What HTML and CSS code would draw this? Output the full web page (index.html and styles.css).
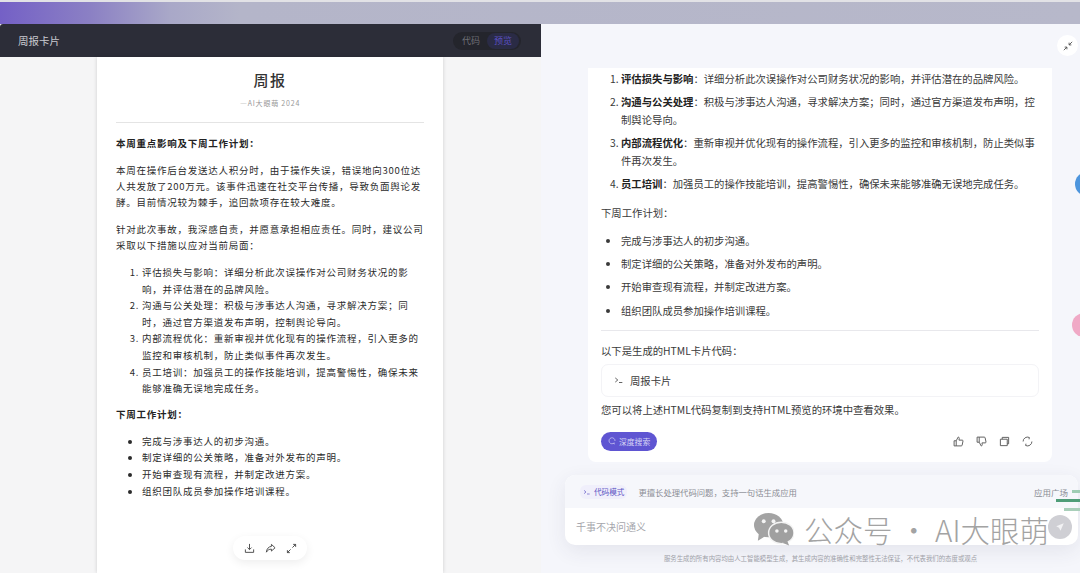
FILE: index.html
```html
<!DOCTYPE html>
<html lang="zh">
<head>
<meta charset="utf-8">
<title>周报卡片</title>
<link rel="stylesheet" href="styles.css">
</head>
<body>
<div class="app">
  <div class="strip"></div>
  <div class="main">
    <section class="left">
      <header class="bar">
        <span class="bar-title">周报卡片</span>
        <div class="toggle"><span class="tab">代码</span><span class="tab tab-on">预览</span></div>
      </header>
      <div class="stage">
        <article class="paper">
          <h1 class="paper-title">周报</h1>
          <p class="paper-sub">—AI大眼萌 2024</p>
          <hr class="paper-rule">
          <h2 class="paper-h">本周重点影响及下周工作计划：</h2>
          <p class="paper-p">本周在操作后台发送达人积分时，由于操作失误，错误地向300位达人共发放了200万元。该事件迅速在社交平台传播，导致负面舆论发酵。目前情况较为棘手，追回款项存在较大难度。</p>
          <p class="paper-p">针对此次事故，我深感自责，并愿意承担相应责任。同时，建议公司采取以下措施以应对当前局面：</p>
          <ol class="paper-ol">
            <li>评估损失与影响：详细分析此次误操作对公司财务状况的影响，并评估潜在的品牌风险。</li>
            <li>沟通与公关处理：积极与涉事达人沟通，寻求解决方案；同时，通过官方渠道发布声明，控制舆论导向。</li>
            <li>内部流程优化：重新审视并优化现有的操作流程，引入更多的监控和审核机制，防止类似事件再次发生。</li>
            <li>员工培训：加强员工的操作技能培训，提高警惕性，确保未来能够准确无误地完成任务。</li>
          </ol>
          <h2 class="paper-h paper-h2">下周工作计划：</h2>
          <ul class="paper-ul">
            <li>完成与涉事达人的初步沟通。</li>
            <li>制定详细的公关策略，准备对外发布的声明。</li>
            <li>开始审查现有流程，并制定改进方案。</li>
            <li>组织团队成员参加操作培训课程。</li>
          </ul>
        </article>
        <div class="tools">
          <svg class="ico" viewBox="0 0 12 12"><path d="M6 1v6M3.8 5 6 7.2 8.2 5M1.5 7v3.2h9V7"/></svg>
          <svg class="ico" viewBox="0 0 12 12"><path d="M7 1.500 11 5.200 7 8.800V6.700C4.500 6.700 3 7.600 1.500 10 1.800 6.500 3.800 4 7 3.700z"/></svg>
          <svg class="ico" viewBox="0 0 12 12"><path d="M7 5 10.500 1.500M7.800 1.500h2.700v2.700M5 7 1.500 10.500M1.500 7.800v2.700h2.700"/></svg>
        </div>
      </div>
    </section>
    <section class="right">
      <button class="collapse" aria-label="收起"><svg class="ico-sm" viewBox="0 0 12 12"><path d="M11 1 7.500 4.500M7.300 2v2.700H10M1 11l3.500-3.500M4.700 10V7.300H2"/></svg></button>
      <div class="answer">
        <ol class="a-ol">
          <li><b>评估损失与影响</b>：详细分析此次误操作对公司财务状况的影响，并评估潜在的品牌风险。</li>
          <li><b>沟通与公关处理</b>：积极与涉事达人沟通，寻求解决方案；同时，通过官方渠道发布声明，控制舆论导向。</li>
          <li><b>内部流程优化</b>：重新审视并优化现有的操作流程，引入更多的监控和审核机制，防止类似事件再次发生。</li>
          <li><b>员工培训</b>：加强员工的操作技能培训，提高警惕性，确保未来能够准确无误地完成任务。</li>
        </ol>
        <p class="a-p a-plan">下周工作计划：</p>
        <ul class="a-ul">
          <li>完成与涉事达人的初步沟通。</li>
          <li>制定详细的公关策略，准备对外发布的声明。</li>
          <li>开始审查现有流程，并制定改进方案。</li>
          <li>组织团队成员参加操作培训课程。</li>
        </ul>
        <hr class="a-rule">
        <p class="a-p a-intro">以下是生成的HTML卡片代码：</p>
        <div class="code-card">
          <svg class="ico-sm" viewBox="0 0 12 12"><path d="M1.500 3.500 4.500 6 1.500 8.500M6 9h4"/></svg>
          <span>周报卡片</span>
        </div>
        <p class="a-p a-end">您可以将上述HTML代码复制到支持HTML预览的环境中查看效果。</p>
        <div class="a-foot">
          <span class="deep"><svg class="ico-xs" viewBox="0 0 12 12"><path d="M9.500 8.500A4.500 4.500 0 1 1 10.500 6M8 9.500l2.500 1"/></svg>深度搜索</span>
          <div class="actions">
            <svg class="ico-a" viewBox="0 0 12 12"><path d="M3.500 5.200v5.600H1.200V5.200zM3.500 5.200 5.600 1.200c1 0 1.400.7 1.200 1.600L6.500 4.500h3.600c.6 0 .9.5.8 1l-.9 4.400c-.1.6-.5.9-1 .9H3.500"/></svg>
            <svg class="ico-a" viewBox="0 0 12 12"><path d="M3.500 6.800V1.200H1.200v5.600zM3.500 6.800l2.100 4c1 0 1.400-.7 1.200-1.600l-.3-1.700h3.600c.6 0 .9-.5.8-1l-.9-4.400c-.1-.6-.5-.9-1-.9H3.500"/></svg>
            <svg class="ico-a" viewBox="0 0 12 12"><path d="M1.500 3.500h7.500v7H1.500zM3.500 3.500V1.500h7v7H9"/></svg>
            <svg class="ico-a" viewBox="0 0 12 12"><path d="M10.800 6A4.800 4.800 0 0 1 4 10.400M1.200 6A4.800 4.800 0 0 1 8 1.600M8 1.600l-.3 2M4 10.400l.3-2"/></svg>
          </div>
        </div>
      </div>
      <div class="composer">
        <div class="composer-top">
          <span class="mode"><svg class="ico-xs" viewBox="0 0 12 12"><path d="M1.500 3.500 4.500 6 1.500 8.500M6 9h4"/></svg>代码模式</span>
          <span class="mode-tip">更擅长处理代码问题，支持一句话生成应用</span>
          <span class="plaza">应用广场</span>
        </div>
        <div class="composer-input">
          <span class="placeholder">千事不决问通义</span>
          <span class="send"><svg class="ico-send" viewBox="0 0 12 12"><path d="M10.500 1.500 1.500 5.200 4.800 7 6.600 10.500z"/></svg></span>
        </div>
      </div>
      <p class="legal">服务生成的所有内容均由人工智能模型生成，其生成内容的准确性和完整性无法保证，不代表我们的态度或观点</p>
      <span class="float float-blue"></span>
      <span class="float float-pink"></span>
      <div class="lines"><i class="line l1"></i><i class="line l2"></i><i class="line l3"></i></div>
    </section>
    <div class="watermark">
      <svg class="wx" viewBox="0 0 42 34"><ellipse cx="16" cy="13" rx="15" ry="12.500" fill="#a3a3a3"/><path d="M6 21 5 29 13 24z" fill="#a3a3a3"/><circle cx="11" cy="9" r="2" fill="#f4f4f4"/><circle cx="21" cy="9" r="2" fill="#f4f4f4"/><ellipse cx="29" cy="21" rx="13" ry="11" fill="#a0a0a0" stroke="#f4f4f4" stroke-width="1.500"/><path d="M35 29l2 5-7-3z" fill="#a0a0a0"/><circle cx="24.500" cy="19" r="1.800" fill="#f4f4f4"/><circle cx="33.500" cy="19" r="1.800" fill="#f4f4f4"/></svg>
      <span>公众号 · AI大眼萌</span>
    </div>
  </div>
</div>
</body>
</html>
```
FILE: styles.css
```css
* { box-sizing: border-box; }
html, body { margin: 0; padding: 0; }
body {
  width: 1080px; height: 573px; overflow: hidden;
  font-family: "Noto Sans CJK SC", "Noto Sans", sans-serif;
  background: #f5f6fb;
}
.app { display: flex; flex-direction: column; height: 573px; }
.strip {
  flex: 0 0 24px;
  border-top: 2px solid #e2e2e6;
  background: linear-gradient(90deg, #7460c6 0, #8b80c4 90px, #a9a8c8 170px, #b4b5c9 240px, #b7b8ca 100%);
}
.main { flex: 1; display: flex; position: relative; min-height: 0; }

.left { flex: 0 0 541px; display: flex; flex-direction: column; min-height: 0; background: #f5f5f6; }
.bar {
  flex: 0 0 33px; display: flex; align-items: center; justify-content: space-between;
  padding: 0 20px 0 18px;
  background: #2c2d38; border-radius: 3px 0 0 0;
}
.bar-title { font-size: 10.500px; color: #c9cad0; }
.toggle { display: flex; align-items: center; height: 18px; background: #24252c; border-radius: 9px; padding: 0 2px; }
.tab { font-size: 9px; color: #6e6f76; padding: 0 7px; line-height: 16px; border-radius: 8px; }
.tab-on { color: #5b50c0; background: #2a2b45; }

.stage { flex: 1; position: relative; display: flex; min-height: 0; padding-left: 97px; }
.paper {
  width: 346px; height: 100%;
  background: #fff; box-shadow: 0 0 4px rgba(0,0,0,.16);
  padding: 10px 19px 0 19px; color: #2b2b2b;
  font-size: 9.500px; letter-spacing: .75px;
}
.paper-title { margin: 0; font-size: 15px; font-weight: 500; line-height: 26px; text-align: center; letter-spacing: 1.500px; color: #333; }
.paper-sub { margin: 4px 0 0; font-size: 7px; line-height: 12px; text-align: center; color: #999; letter-spacing: .8px; }
.paper-rule { margin: 13px 0 0; border: 0; border-top: 1px solid #e4e4e4; }
.paper-h { margin: 12px 0 0; font-size: 9.500px; line-height: 16px; font-weight: 700; color: #222; }
.paper-h2 { margin-top: 9px; }
.paper-p { margin: 11px 0 0; line-height: 16px; }
.paper-ol { margin: 11px 0 0; padding: 0 0 0 26px; }
.paper-ol li { line-height: 16.600px; }
.paper-ul { margin: 11px 0 0; padding: 0 0 0 26px; }
.paper-ul li { line-height: 16.600px; }

.tools {
  position: absolute; left: 233px; top: 479px; width: 74px; height: 24px;
  display: flex; align-items: center; justify-content: center; gap: 10px;
  background: #fff; border-radius: 12px; box-shadow: 0 3px 10px rgba(0,0,0,.07);
}
.ico { width: 11px; height: 11px; fill: none; stroke: #444; stroke-width: 1; }
.ico-sm { width: 10px; height: 10px; fill: none; stroke: #444; stroke-width: 1; flex: none; }
.ico-xs { width: 8px; height: 8px; fill: none; stroke: currentColor; stroke-width: 1; flex: none; }
.ico-a { width: 11px; height: 11px; fill: none; stroke: #555; stroke-width: 1; }

.right { flex: 1; position: relative; display: flex; flex-direction: column; min-width: 0; background: #f5f6fb; }
.collapse {
  position: absolute; top: 11px; right: 2px; width: 21px; height: 21px; padding: 0;
  display: flex; align-items: center; justify-content: center;
  background: #fff; border: 0; border-radius: 50%;
}
.answer {
  margin: 44px 28px 0 47px; padding: 2px 13px 0 13px; height: 394px;
  background: #fff; border-radius: 0 0 8px 8px;
  font-size: 10.350px; color: #3a3a3a;
}
.a-ol { margin: 0; padding: 0 0 0 20px; }
.a-ol li { line-height: 18px; margin-bottom: 5px; }
.a-ol b { color: #222; font-weight: 700; }
.a-p { margin: 0; line-height: 18px; }
.a-plan { margin-top: 11px; }
.a-ul { margin: 10px 0 0; padding: 0 0 0 20px; }
.a-ul li { line-height: 18px; margin-bottom: 5.200px; }
.a-rule { margin: 10px 0 0; border: 0; border-top: 1px solid #e8e8ec; }
.a-intro { margin-top: 11px; }
.code-card {
  margin-top: 4px; height: 33px; display: flex; align-items: center; gap: 6px;
  padding: 0 12px; border: 1px solid #f3f3f6; border-radius: 7px; font-size: 10.350px;
}
.a-end { margin-top: 4px; }
.a-foot { margin-top: 13px; display: flex; align-items: center; justify-content: space-between; }
.deep {
  display: inline-flex; align-items: center; gap: 3px; height: 19px; padding: 0 7px;
  background: #5f55d2; color: #d8d6f6; font-size: 7.800px; border-radius: 10px;
}
.actions { display: flex; gap: 12px; margin-right: 6px; }

.composer {
  position: absolute; left: 24px; top: 451px; width: 513px; height: 70px;
  border-radius: 10px; background: #fff; overflow: hidden;
  box-shadow: 0 6px 20px rgba(60,60,90,.09);
}
.composer-top {
  height: 33px; display: flex; align-items: center; padding: 0 10px 0 15px;
  background: #f6f7fb; font-size: 8.300px; color: #8b8d95;
}
.mode { display: inline-flex; align-items: center; gap: 3px; color: #5d55c4; background: #f0effb; padding: 0 3px; border-radius: 6px; line-height: 14px; font-size: 7.600px; }
.mode-tip { margin-left: 11px; font-size: 8.350px; }
.plaza { margin-left: auto; font-size: 8.500px; }
.composer-input { height: 37px; display: flex; align-items: center; justify-content: space-between; padding: 0 6px 0 11px; }
.placeholder { font-size: 10px; color: #a5a6ac; }
.send { width: 24px; height: 24px; border-radius: 50%; background: #cfcfd4; display: flex; align-items: center; justify-content: center; }
.ico-send { width: 10px; height: 10px; fill: #f2f2f4; }
.legal { position: absolute; left: 20px; right: 0; top: 530px; margin: 0; text-align: center; font-size: 6.400px; line-height: 10px; color: #a0a1a8; }
.float { position: absolute; border-radius: 50%; }
.float-blue { left: 534px; top: 148px; width: 24px; height: 24px; background: #4d95dd; }
.float-pink { left: 531px; top: 289px; width: 24px; height: 24px; background: #f0a9c6; }
.lines { position: absolute; right: 0; top: 466px; width: 28px; display: flex; flex-direction: column; align-items: flex-end; gap: 6px; }
.line { display: block; height: 3px; }
.l1 { width: 8px; background: #9fcdb4; }
.l2 { width: 24px; background: #4f9d78; }
.l3 { width: 16px; background: #a9cfba; }

.watermark {
  position: absolute; left: 753px; top: 488px; display: flex; align-items: center; gap: 10px;
  color: #a3a3a3; font-size: 29.500px; line-height: 34px; white-space: nowrap;
  font-weight: 300;
}
.wx { width: 41px; height: 34px; flex: none; }
```
